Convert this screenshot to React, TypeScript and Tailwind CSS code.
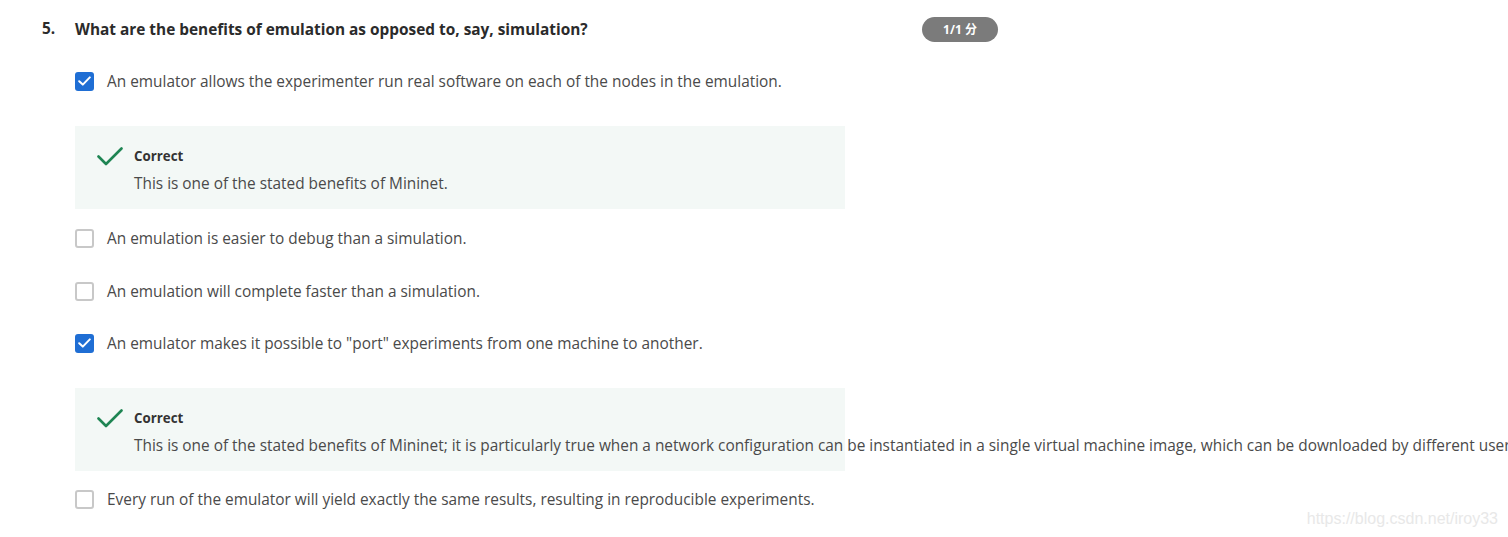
import React from "react";

type Option = {
  text: string;
  checked: boolean;
  feedback?: string;
};

const options: Option[] = [
  {
    text: "An emulator allows the experimenter run real software on each of the nodes in the emulation.",
    checked: true,
    feedback: "This is one of the stated benefits of Mininet.",
  },
  { text: "An emulation is easier to debug than a simulation.", checked: false },
  { text: "An emulation will complete faster than a simulation.", checked: false },
  {
    text: 'An emulator makes it possible to "port" experiments from one machine to another.',
    checked: true,
    feedback:
      "This is one of the stated benefits of Mininet; it is particularly true when a network configuration can be instantiated in a single virtual machine image, which can be downloaded by different users.",
  },
  {
    text: "Every run of the emulator will yield exactly the same results, resulting in reproducible experiments.",
    checked: false,
  },
];

const CheckBox = ({ checked }: { checked: boolean }) =>
  checked ? (
    <span className="w-[19px] h-[19px] rounded-[3px] bg-[#1f6ed4] flex items-center justify-center shrink-0">
      <svg width="13" height="10" viewBox="0 0 13 10" fill="none">
        <path d="M1.2 5.2 L4.8 8.6 L11.8 1.4" stroke="white" strokeWidth="2" strokeLinecap="round" strokeLinejoin="round" />
      </svg>
    </span>
  ) : (
    <span className="w-[19px] h-[19px] rounded-[3px] border-2 border-[#c8c8c8] bg-white shrink-0" />
  );

const Feedback = ({ text }: { text: string }) => (
  <div className="w-[770px] bg-[#f3f8f6] pt-[20px] pb-[16px] pl-[22px] flex items-start">
    <svg width="26" height="19" viewBox="0 0 26 19" fill="none" className="mt-[1px] shrink-0">
      <path d="M1.5 9.5 L9 17 L24.5 1.5" stroke="#1e8553" strokeWidth="2.6" strokeLinecap="round" strokeLinejoin="round" />
    </svg>
    <div className="ml-[11px]">
      <div className="h-[20px] leading-[21px] text-[13.3px] font-bold text-[#333]">Correct</div>
      <div className="mt-[7px] h-[20px] leading-[22px] text-[15.4px] text-[#4a4a4a] whitespace-nowrap">{text}</div>
    </div>
  </div>
);

const margins = ["mt-[29px]", "mt-[19px]", "mt-[33px]", "mt-[32px]", "mt-[18px]"];

export default function App() {
  return (
    <div
      className="relative w-full h-[537px] overflow-hidden bg-white pl-[42px] pt-[16px]"
      style={{ fontFamily: '"Open Sans", "Noto Sans CJK SC", sans-serif' }}
    >
      <div className="flex items-start">
        <div className="w-[33px] h-[25px] leading-[25px] text-[15.4px] font-bold text-[#2b2b2b]">5.</div>
        <div>
          <div className="w-[923px] flex items-center justify-between">
            <div className="h-[25px] leading-[25px] text-[15.4px] font-bold text-[#2b2b2b]">
              What are the benefits of emulation as opposed to, say, simulation?
            </div>
            <span className="w-[76px] h-[25px] mt-[1px] rounded-full bg-[#7b7b7b] text-white text-[12px] font-bold flex items-center justify-center">
              1/1 分
            </span>
          </div>

          {options.map((o, i) => (
            <div key={i}>
              <div className={`${margins[i]} h-[20px] flex items-center`}>
                <CheckBox checked={o.checked} />
                <span className="ml-[13px] pt-[2px] text-[15.4px] text-[#4a4a4a] whitespace-nowrap">{o.text}</span>
              </div>
              {o.feedback && (
                <div className="mt-[35px]">
                  <Feedback text={o.feedback} />
                </div>
              )}
            </div>
          ))}
        </div>
      </div>

      <div
        className="absolute right-[10px] bottom-[6px] text-[16px] text-[#e8e8e8]"
        style={{ fontFamily: '"Liberation Sans", Arial, sans-serif' }}
      >
        https://blog.csdn.net/iroy33
      </div>
    </div>
  );
}
